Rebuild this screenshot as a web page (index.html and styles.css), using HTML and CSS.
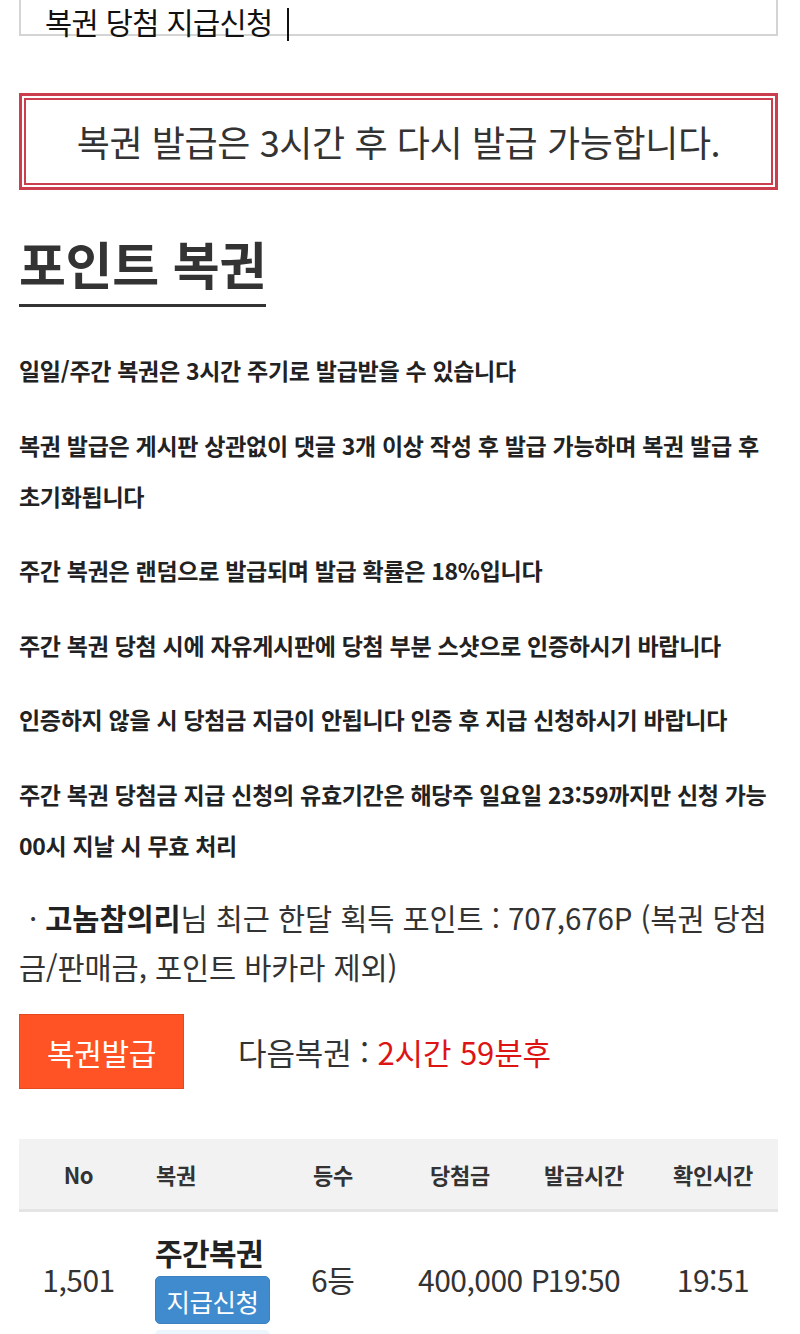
FILE: index.html
```html
<!DOCTYPE html>
<html lang="ko">
<head>
<meta charset="utf-8">
<title>포인트 복권</title>
<link rel="stylesheet" href="styles.css">
</head>
<body>
<div class="page">
  <div class="tabbox"><span class="tabtext">복권 당첨 지급신청<span class="bar"></span></span></div>

  <div class="notice"><div class="notice-inner">복권 발급은 3시간 후 다시 발급 가능합니다.</div></div>

  <h2 class="title">포인트 복권</h2>

  <div class="rules">
    <p>일일/주간 복권은 3시간 주기로 발급받을 수 있습니다</p>
    <p>복권 발급은 게시판 상관없이 댓글 3개 이상 작성 후 발급 가능하며 복권 발급 후<br>초기화됩니다</p>
    <p>주간 복권은 랜덤으로 발급되며 발급 확률은 18%입니다</p>
    <p>주간 복권 당첨 시에 자유게시판에 당첨 부분 스샷으로 인증하시기 바랍니다</p>
    <p>인증하지 않을 시 당첨금 지급이 안됩니다 인증 후 지급 신청하시기 바랍니다</p>
    <p>주간 복권 당첨금 지급 신청의 유효기간은 해당주 일요일 23:59까지만 신청 가능<br>00시 지날 시 무효 처리</p>
  </div>

  <p class="info">· <b>고놈참의리</b>님 최근 한달 획득 포인트 : 707,676P (복권 당첨<br>금/판매금, 포인트 바카라 제외)</p>

  <div class="issue-row">
    <button class="issue-btn">복권발급</button>
    <span class="next">다음복권 : <span class="remain">2시간 59분후</span></span>
  </div>

  <div class="table">
    <div class="thead">
      <div class="c1">No</div>
      <div class="c2">복권</div>
      <div class="c3">등수</div>
      <div class="c4">당첨금</div>
      <div class="c5">발급시간</div>
      <div class="c6">확인시간</div>
    </div>
    <div class="trow">
      <div class="c1 cell">1,501</div>
      <div class="c2 lot">
        <div class="lot-name">주간복권</div>
        <button class="pay-btn">지급신청</button>
        <div class="sub-btn"></div>
      </div>
      <div class="c3 cell">6등</div>
      <div class="c4 cell money">400,000 P</div>
      <div class="c5 cell">19:50</div>
      <div class="c6 cell">19:51</div>
    </div>
  </div>
</div>
</body>
</html>
```

FILE: styles.css
```css
html, body {
  margin: 0;
  padding: 0;
  background: #fff;
}
body {
  font-family: "Noto Sans CJK KR", "Noto Sans", sans-serif;
  color: #333;
}
.page {
  padding: 0 22px 0 19px;
  overflow: hidden;
  height: 1334px;
  box-sizing: border-box;
}
.tabbox {
  box-sizing: border-box;
  height: 36px;
  border: 2px solid #d4d4d4;
  border-top: 0;
  padding-left: 24px;
}
.tabtext {
  display: flex;
  align-items: flex-start;
  font-size: 29.5px;
  line-height: 42px;
  color: #111;
  letter-spacing: -0.6px;
  white-space: nowrap;
}
.bar {
  display: block;
  width: 2px;
  height: 33px;
  margin: 8px 0 0 14px;
  background: #111;
}
.notice {
  margin-top: 57px;
  border: 3px solid #cb3e4e;
  padding: 2px;
}
.notice-inner {
  border: 2px solid #cb3e4e;
  height: 83px;
  line-height: 83px;
  text-align: center;
  font-size: 36px;
  color: #333;
  letter-spacing: -0.4px;
}
.title {
  display: inline-block;
  margin: 40px 0 0;
  font-size: 51px;
  font-weight: 700;
  line-height: 67px;
  padding: 0 0 7px;
  border-bottom: 3px solid #333;
  color: #333;
  letter-spacing: -0.3px;
}
.rules {
  margin-top: 38px;
}
.rules p {
  margin: 0 0 23.5px;
  font-size: 23px;
  font-weight: 700;
  line-height: 51px;
  color: #222;
  letter-spacing: -0.3px;
  white-space: nowrap;
}
.info {
  margin: -1px 0 0;
  text-indent: 10px;
  font-size: 29.5px;
  line-height: 49px;
  color: #333;
  letter-spacing: -0.1px;
  white-space: nowrap;
}
.info b {
  font-weight: 700;
  color: #222;
}
.issue-row {
  display: flex;
  align-items: center;
  margin-top: 23px;
  gap: 54px;
}
.issue-btn {
  width: 165px;
  height: 75px;
  background: #ff5325;
  border: 1px solid #e2491f;
  color: #fff;
  font-family: inherit;
  font-size: 30px;
  padding: 0;
  letter-spacing: -0.3px;
}
.next {
  font-size: 31px;
  color: #333;
  letter-spacing: -0.1px;
}
.remain {
  color: #dd1414;
}
.table {
  margin-top: 50px;
}
.thead, .trow {
  display: grid;
  grid-template-columns: 119px 157px 105px 120px 128px 130px;
}
.thead {
  height: 70px;
  background: #f2f2f2;
  border-bottom: 3px solid #e4e4e4;
  align-items: center;
  font-size: 22px;
  font-weight: 700;
  color: #333;
  letter-spacing: -0.3px;
}
.thead > div {
  text-align: center;
  white-space: nowrap;
}
.thead .c2, .thead .c3 {
  text-align: left;
  padding-left: 18px;
}
.trow {
  align-items: start;
}
.cell {
  padding-top: 47px;
  font-size: 30px;
  line-height: 40px;
  color: #333;
  text-align: center;
  white-space: nowrap;
  letter-spacing: -0.5px;
}
.trow .c3 {
  text-align: left;
  padding-left: 16px;
}
.money {
  text-align: left;
  padding-left: 18px;
  overflow: visible;
}
.lot {
  padding: 21px 0 0 17px;
}
.lot-name {
  font-size: 30px;
  font-weight: 700;
  line-height: 38px;
  color: #222;
  letter-spacing: -0.6px;
}
.pay-btn {
  display: block;
  margin-top: 5px;
  width: 115px;
  height: 48px;
  background: #3f8bcd;
  border: 1px solid #3b82c2;
  border-radius: 5px;
  color: #fff;
  font-family: inherit;
  font-size: 25.5px;
  padding: 0;
  letter-spacing: -0.5px;
}
.sub-btn {
  margin-top: 6px;
  width: 115px;
  height: 40px;
  background: #eaf6fc;
  border-radius: 5px;
}
```
